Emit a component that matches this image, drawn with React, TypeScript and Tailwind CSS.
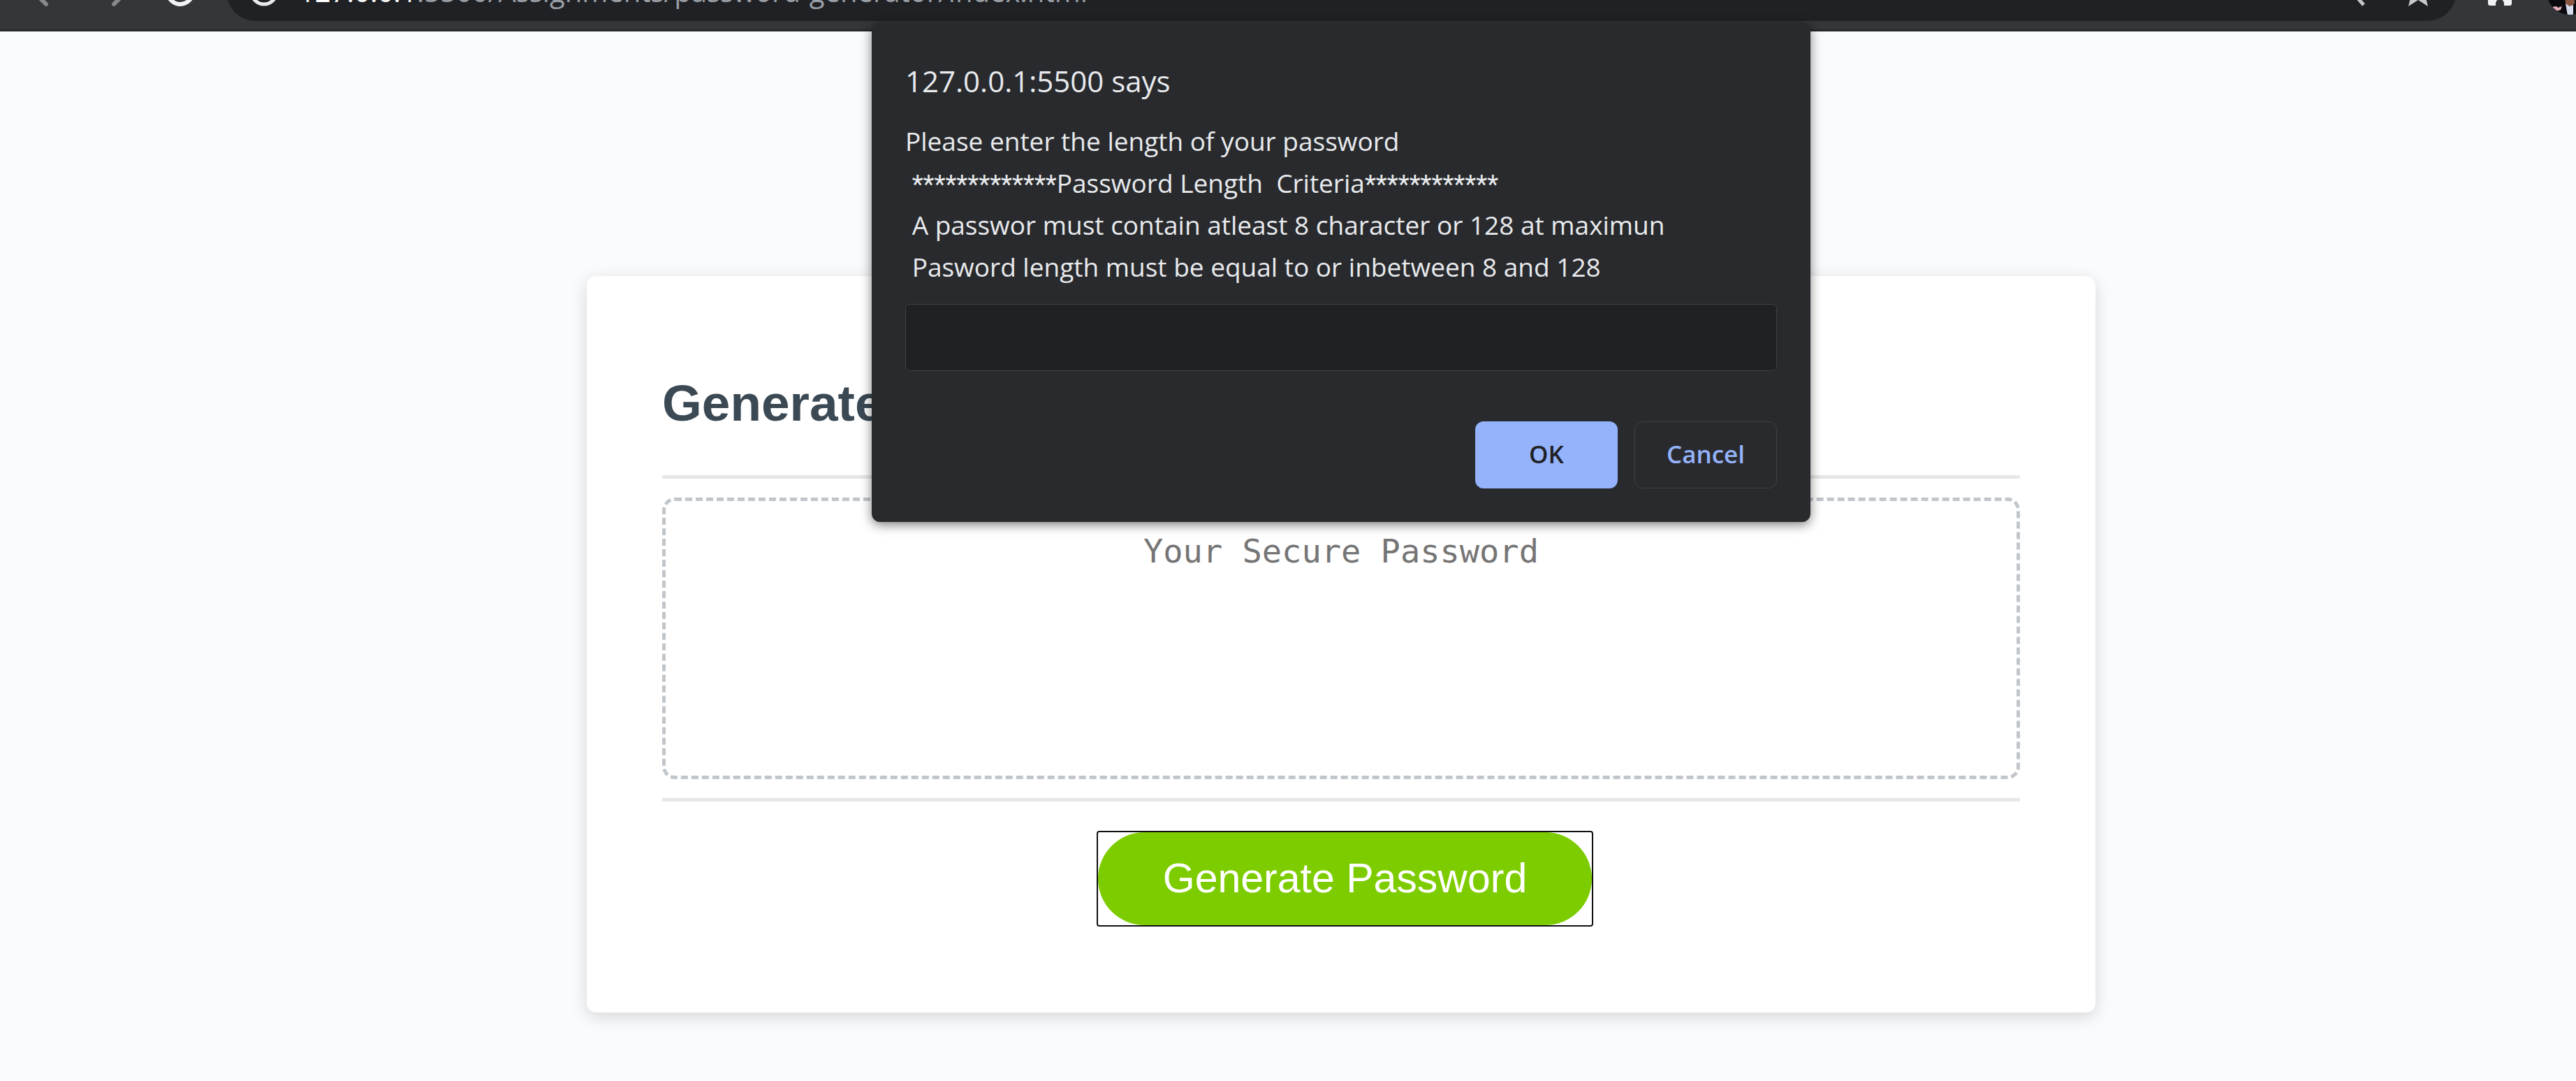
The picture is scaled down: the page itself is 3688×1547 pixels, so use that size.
import React from "react";

function BrowserBar() {
  return (
    <header className="flex h-[45px] items-end gap-3 overflow-hidden border-b-3 border-[#28292c] bg-[#35363a] pb-3 pl-6">
      <button aria-label="Back" className="shrink-0">
        <svg className="h-[84px] w-[84px]" viewBox="24 -54 84 84" fill="none" stroke="#87888b" strokeWidth="6" strokeLinecap="round" strokeLinejoin="round">
          <path d="M66 -30 L48 -12 L66 6 M48 -12 H84" />
        </svg>
      </button>
      <button aria-label="Forward" className="shrink-0">
        <svg className="h-[84px] w-[84px]" viewBox="120 -54 84 84" fill="none" stroke="#87888b" strokeWidth="6" strokeLinecap="round" strokeLinejoin="round">
          <path d="M163 -30 L181 -12 L163 6 M181 -12 H145" />
        </svg>
      </button>
      <button aria-label="Reload" className="shrink-0">
        <svg className="h-[84px] w-[84px]" viewBox="216 -54 84 84" fill="none" stroke="#f1f3f4" strokeWidth="6">
          <circle cx="258" cy="-12" r="18" />
        </svg>
      </button>
      <div className="mx-1 ml-3 flex h-[84px] min-w-0 flex-1 items-center rounded-full bg-[#202124] px-3">
        <button aria-label="Site information" className="shrink-0">
          <svg className="h-[84px] w-[84px]" viewBox="336 -54 84 84" fill="none" stroke="#e8eaed" strokeWidth="5">
            <circle cx="378" cy="-12" r="18" />
          </svg>
        </button>
        <span className="ml-2 flex-1 whitespace-nowrap text-[40px] leading-[56px] text-[#9aa0a6]">
          <span className="text-white">127.0.0.1</span>:5500/Assignments/password-generator/index.html
        </span>
        <button aria-label="Zoom" className="shrink-0">
          <svg className="h-[84px] w-[84px]" viewBox="3325 -54 84 84" fill="none" stroke="#c4c5c7" strokeWidth="5">
            <circle cx="3362" cy="-19" r="12" />
            <path d="M3370 -9 L3384 7" />
          </svg>
        </button>
        <button aria-label="Bookmark this page" className="ml-3 shrink-0">
          <svg className="h-[84px] w-[84px]" viewBox="3421 -54 84 84" fill="#c8c9cb">
            <path d="M3448 9 L3452 -7 L3438 -18 L3455 -20 L3462 -35 L3469 -20 L3486 -18 L3472 -7 L3476 9 L3462 0 Z" />
          </svg>
        </button>
      </div>
      <button aria-label="Extensions" className="shrink-0">
        <svg className="h-[84px] w-[92px]" viewBox="3533 -54 92 84" fill="#f1f3f4">
          <path d="M3562 -25 H3596 V5 Q3596 8 3593 8 H3585 V5 A6 6 0 0 0 3573 5 V8 H3565 Q3562 8 3562 5 Z" />
        </svg>
      </button>
      <button aria-label="Profile" className="shrink-0">
        <svg className="h-[84px] w-[51px]" viewBox="3637 -54 51 84">
          <clipPath id="avatar">
            <circle cx="3679" cy="-12" r="33" />
          </clipPath>
          <g clipPath="url(#avatar)">
            <rect x="3637" y="-54" width="51" height="84" fill="#0b0b0f" />
            <path d="M3672 -6 H3686 V5 L3680 10 L3673 5 Z" fill="#8a5540" />
            <path d="M3673 5 L3679 9 L3684 7 L3684 22 H3676 Z" fill="#d5dcec" />
            <path d="M3654 10 L3660 9 L3662 11 L3668 9 L3666 14 L3660 16 L3655 13 Z" fill="#eab2bd" />
          </g>
        </svg>
      </button>
    </header>
  );
}

function PasswordCard() {
  return (
    <section className="w-full max-w-[2160px] rounded-[14px] bg-white px-[108px] pb-[123px] shadow-[0_6px_24px_rgba(0,0,0,0.15)]">
      <header className="border-b-5 border-[#e7e7e7] pt-[138px] pb-[59px]">
        <h2 className="text-[73px] leading-[88px] font-bold text-[#3b4954]">Generate a Password</h2>
      </header>
      <div className="border-b-5 border-[#e7e7e7] py-[27px]">
        <textarea
          readOnly
          aria-label="Generated Password"
          placeholder="Your Secure Password"
          className="block h-[403px] w-full resize-none overflow-hidden rounded-[18px] border-5 border-dashed border-[#c1c6cb] bg-transparent px-6 pt-11 text-center font-['DejaVu_Sans_Mono',monospace] text-[47px] leading-[56px] placeholder:text-[#757575] placeholder:opacity-100"
        />
      </div>
      <footer className="flex justify-center pt-[42px] pl-[11px]">
        <div className="rounded-[4px] border-2 border-[#101010]">
          <button className="block rounded-full bg-[#7dcc00] px-[93px] py-[30px] text-[59px] leading-[73px] text-white">
            Generate Password
          </button>
        </div>
      </footer>
    </section>
  );
}

function PromptDialog() {
  return (
    <div role="dialog" aria-labelledby="prompt-title" className="w-full max-w-[1344px] rounded-[12px] bg-[#292a2d] p-12 font-['Open_Sans',sans-serif] text-[#e8eaed] shadow-[0_4px_16px_rgba(0,0,0,0.5)]">
      <h1 id="prompt-title" className="text-[42px] leading-[72px]">127.0.0.1:5500 says</h1>
      <label htmlFor="prompt-input" className="mt-5 block whitespace-pre-wrap text-[37px] leading-[60px]">
        {"Please enter the length of your password\n "}
        <span className="font-[Roboto,sans-serif] leading-none">*************</span>
        {"Password Length  Criteria"}
        <span className="font-[Roboto,sans-serif] leading-none">************</span>
        {"\n A passwor must contain atleast 8 character or 128 at maximun\n Pasword length must be equal to or inbetween 8 and 128"}
      </label>
      <input id="prompt-input" type="text" className="mt-[23px] block h-24 w-full rounded-[6px] border border-[#3f4044] bg-[#202124] px-6 text-[37px] outline-none" />
      <div className="mt-[72px] flex justify-end gap-6">
        <button className="h-24 w-[204px] rounded-[12px] bg-[#94b3fb] pb-0.5 text-[35px] font-semibold text-[#202124]">OK</button>
        <button className="h-24 w-[204px] rounded-[12px] border border-[#3f4044] pb-0.5 text-[35px] font-semibold text-[#94b3fb]">Cancel</button>
      </div>
    </div>
  );
}

export default function App() {
  return (
    <div className="relative min-h-screen overflow-hidden bg-[#fafbfd] font-['Liberation_Sans',sans-serif]">
      <div className="font-['Open_Sans',sans-serif]">
        <BrowserBar />
      </div>
      <main className="flex justify-center pt-[350px] pb-[98px] pl-[152px]">
        <PasswordCard />
      </main>
      <div className="absolute inset-x-0 top-8 flex justify-center pl-[152px]">
        <PromptDialog />
      </div>
    </div>
  );
}
